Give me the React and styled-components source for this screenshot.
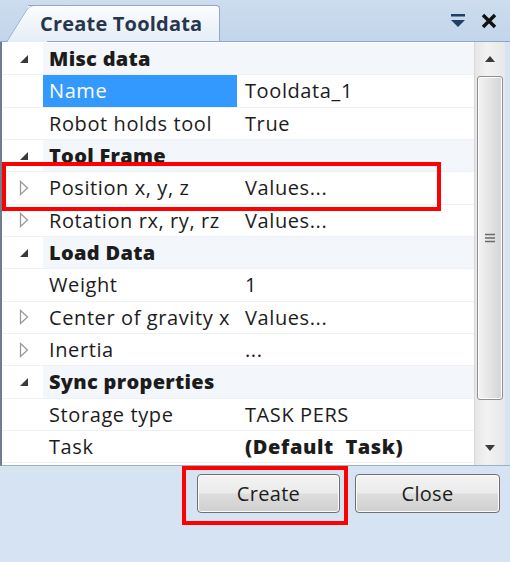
import React from 'react';
import styled, { createGlobalStyle } from 'styled-components';

const Global = createGlobalStyle`
  html, body { margin: 0; padding: 0; background: #d6e3f2; }
  body { font-family: "Open Sans", "Liberation Sans", sans-serif; }
`;

const Window = styled.div`
  position: relative;
  width: 510px;
  height: 562px;
  background: #d6e3f2;
  display: flex;
  flex-direction: column;
  overflow: hidden;
`;

const TitleBar = styled.div`
  height: 42px;
  box-sizing: border-box;
  display: flex;
  align-items: flex-end;
  background: linear-gradient(#cddcee, #c3d5eb);
  border-bottom: 1px solid #8ea6c4;
`;

const Tab = styled.div`
  position: relative;
  margin-left: 28px;
  width: 192px;
  height: 36px;
  box-sizing: border-box;
  display: flex;
  align-items: center;
  padding-left: 12px;
  font-size: 20px;
  font-weight: 700;
  letter-spacing: 0.2px;
  color: #27364d;
  background: linear-gradient(#fbfcfe, #e5edf7);
  border: 1px solid #91a8c6;
  border-bottom: none;
  border-left: none;
  border-radius: 0 4px 0 0;

  &::before {
    content: '';
    position: absolute;
    left: -22px;
    top: -1px;
    width: 40px;
    height: 36px;
    background: linear-gradient(#fbfcfe, #e5edf7);
    border-left: 1px solid #91a8c6;
    border-top: 1px solid #91a8c6;
    border-radius: 6px 0 0 0;
    transform-origin: bottom left;
    transform: skewX(-32deg);
    z-index: 0;
  }
  span { position: relative; z-index: 1; }
`;

const TitleIcons = styled.div`
  margin-left: auto;
  display: flex;
  align-items: center;
  gap: 14px;
  padding-right: 12px;
  align-self: center;
`;

const Body = styled.div`
  height: 424px;
  display: flex;
  background: #ffffff;
  border-left: 2px solid #6f7d8e;
  border-bottom: 1px solid #9fb0c5;
  box-sizing: border-box;
`;

const Grid = styled.div`
  flex: 1;
  padding-top: 1px;
`;

const Row = styled.div`
  display: grid;
  grid-template-columns: 41px 194px 1fr;
  height: 32.33px;
  box-sizing: border-box;
  align-items: center;
  font-size: 20px;
  color: #1c1c1c;
  background: ${p => (p.$cat ? '#f3f7fb' : '#ffffff')};
  border-bottom: 1px solid #eef2f7;
`;

const Gutter = styled.div`
  height: 100%;
  display: flex;
  align-items: center;
  justify-content: center;
  padding-left: 2px;
  background: #ffffff;
`;

const Label = styled.div`
  height: 100%;
  display: flex;
  align-items: center;
  padding-left: 6px;
  white-space: nowrap;
  overflow: hidden;
  font-weight: ${p => (p.$bold ? 800 : 400)};
  background: ${p => (p.$selected ? '#3399ff' : 'transparent')};
  color: ${p => (p.$selected ? '#ffffff' : '#1c1c1c')};
  letter-spacing: ${p => (p.$bold ? '0.3px' : '0.6px')};
`;

const Value = styled.div`
  height: 100%;
  display: flex;
  align-items: center;
  padding-left: 8px;
  white-space: pre;
  font-weight: ${p => (p.$bold ? 800 : 400)};
  letter-spacing: ${p => (p.$bold ? '0.6px' : '0.6px')};
`;

const Scrollbar = styled.div`
  width: 30px;
  display: flex;
  flex-direction: column;
  align-items: center;
  background: linear-gradient(90deg, #e6e6e6, #f2f2f2 40%, #e8e8e8);
  border-left: 1px solid #d8d8d8;
`;

const ArrowBtn = styled.div`
  height: 34px;
  display: flex;
  align-items: center;
  justify-content: center;
  width: 100%;
`;

const Thumb = styled.div`
  width: 26px;
  height: 324px;
  box-sizing: border-box;
  border: 1px solid #8f8f8f;
  border-radius: 3px;
  background: linear-gradient(90deg, #f4f4f4, #e4e4e4 50%, #d4d4d4);
  display: flex;
  align-items: center;
  justify-content: center;
  box-shadow: inset 0 0 0 1px #ffffff;
`;

const Spacer = styled.div`
  flex: 1;
`;

const RightFrame = styled.div`
  width: 5px;
  background: #d6e3f2;
`;

const Footer = styled.div`
  flex: 1;
  display: flex;
  justify-content: flex-end;
  gap: 15px;
  padding: 8px 10px 0 0;
  align-items: flex-start;
`;

const Button = styled.button`
  width: ${p => p.$w}px;
  height: 39px;
  font-family: "Open Sans", "Liberation Sans", sans-serif;
  font-size: 20px;
  letter-spacing: 0.3px;
  color: #1c1c1c;
  border: 1px solid #707070;
  border-radius: 4px;
  background: linear-gradient(#f3f3f3 0%, #ebebeb 48%, #dddddd 52%, #cfcfcf 100%);
  box-shadow: inset 0 0 0 1px #fbfbfb;
  padding: 0;
`;

const Marker = styled.div`
  position: absolute;
  left: ${p => p.$x}px;
  top: ${p => p.$y}px;
  width: ${p => p.$w}px;
  height: ${p => p.$h}px;
  box-sizing: border-box;
  border: 4px solid #ff0000;
  pointer-events: none;
`;

const Expanded = () => (
  <svg width="10" height="10" viewBox="0 0 10 10">
    <polygon points="9,1 9,9 1,9" fill="#3a3a3a" />
  </svg>
);

const Collapsed = () => (
  <svg width="10" height="16" viewBox="0 0 10 16">
    <polygon points="1.5,1.5 8.5,8 1.5,14.5" fill="none" stroke="#9a9a9a" strokeWidth="1.3" />
  </svg>
);

const rows = [
  { cat: true, label: 'Misc data' },
  { label: 'Name', value: 'Tooldata_1', selected: true },
  { label: 'Robot holds tool', value: 'True' },
  { cat: true, label: 'Tool Frame' },
  { label: 'Position x, y, z', value: 'Values...', sub: true },
  { label: 'Rotation rx, ry, rz', value: 'Values...', sub: true },
  { cat: true, label: 'Load Data' },
  { label: 'Weight', value: '1' },
  { label: 'Center of gravity x', value: 'Values...', sub: true },
  { label: 'Inertia', value: '...', sub: true },
  { cat: true, label: 'Sync properties' },
  { label: 'Storage type', value: 'TASK PERS' },
  { label: 'Task', value: '(Default  Task)', bold: true },
];

export default function App() {
  return (
    <Window>
      <Global />
      <TitleBar>
        <Tab><span>Create Tooldata</span></Tab>
        <TitleIcons>
          <svg width="16" height="18" viewBox="0 0 16 18">
            <rect x="1" y="2" width="14" height="2.5" fill="#1f3f66" />
            <polygon points="1,8 15,8 8,15" fill="#1f3f66" />
          </svg>
          <svg width="18" height="18" viewBox="0 0 18 18">
            <path d="M3 3 L15 15 M15 3 L3 15" stroke="#111" strokeWidth="3.4" />
          </svg>
        </TitleIcons>
      </TitleBar>
      <Body>
        <Grid>
          {rows.map((r, i) => (
            <Row key={i} $cat={r.cat}>
              <Gutter>{r.cat ? <Expanded /> : r.sub ? <Collapsed /> : null}</Gutter>
              <Label $bold={r.cat} $selected={r.selected}>{r.label}</Label>
              <Value $bold={r.bold}>{r.value}</Value>
            </Row>
          ))}
        </Grid>
        <Scrollbar>
          <ArrowBtn>
            <svg width="12" height="8" viewBox="0 0 12 8">
              <polygon points="6,1 11,7 1,7" fill="#3b3b3b" />
            </svg>
          </ArrowBtn>
          <Thumb>
            <svg width="12" height="10" viewBox="0 0 12 10">
              <path d="M1 1.5 H11 M1 5 H11 M1 8.5 H11" stroke="#6b6b6b" strokeWidth="1.4" />
            </svg>
          </Thumb>
          <Spacer />
          <ArrowBtn>
            <svg width="12" height="8" viewBox="0 0 12 8">
              <polygon points="1,1 11,1 6,7" fill="#3b3b3b" />
            </svg>
          </ArrowBtn>
        </Scrollbar>
        <RightFrame />
      </Body>
      <Footer>
        <Button $w={143}>Create</Button>
        <Button $w={145}>Close</Button>
      </Footer>
      <Marker $x={2} $y={162} $w={439} $h={49} />
      <Marker $x={182} $y={466} $w={166} $h={59} />
    </Window>
  );
}
